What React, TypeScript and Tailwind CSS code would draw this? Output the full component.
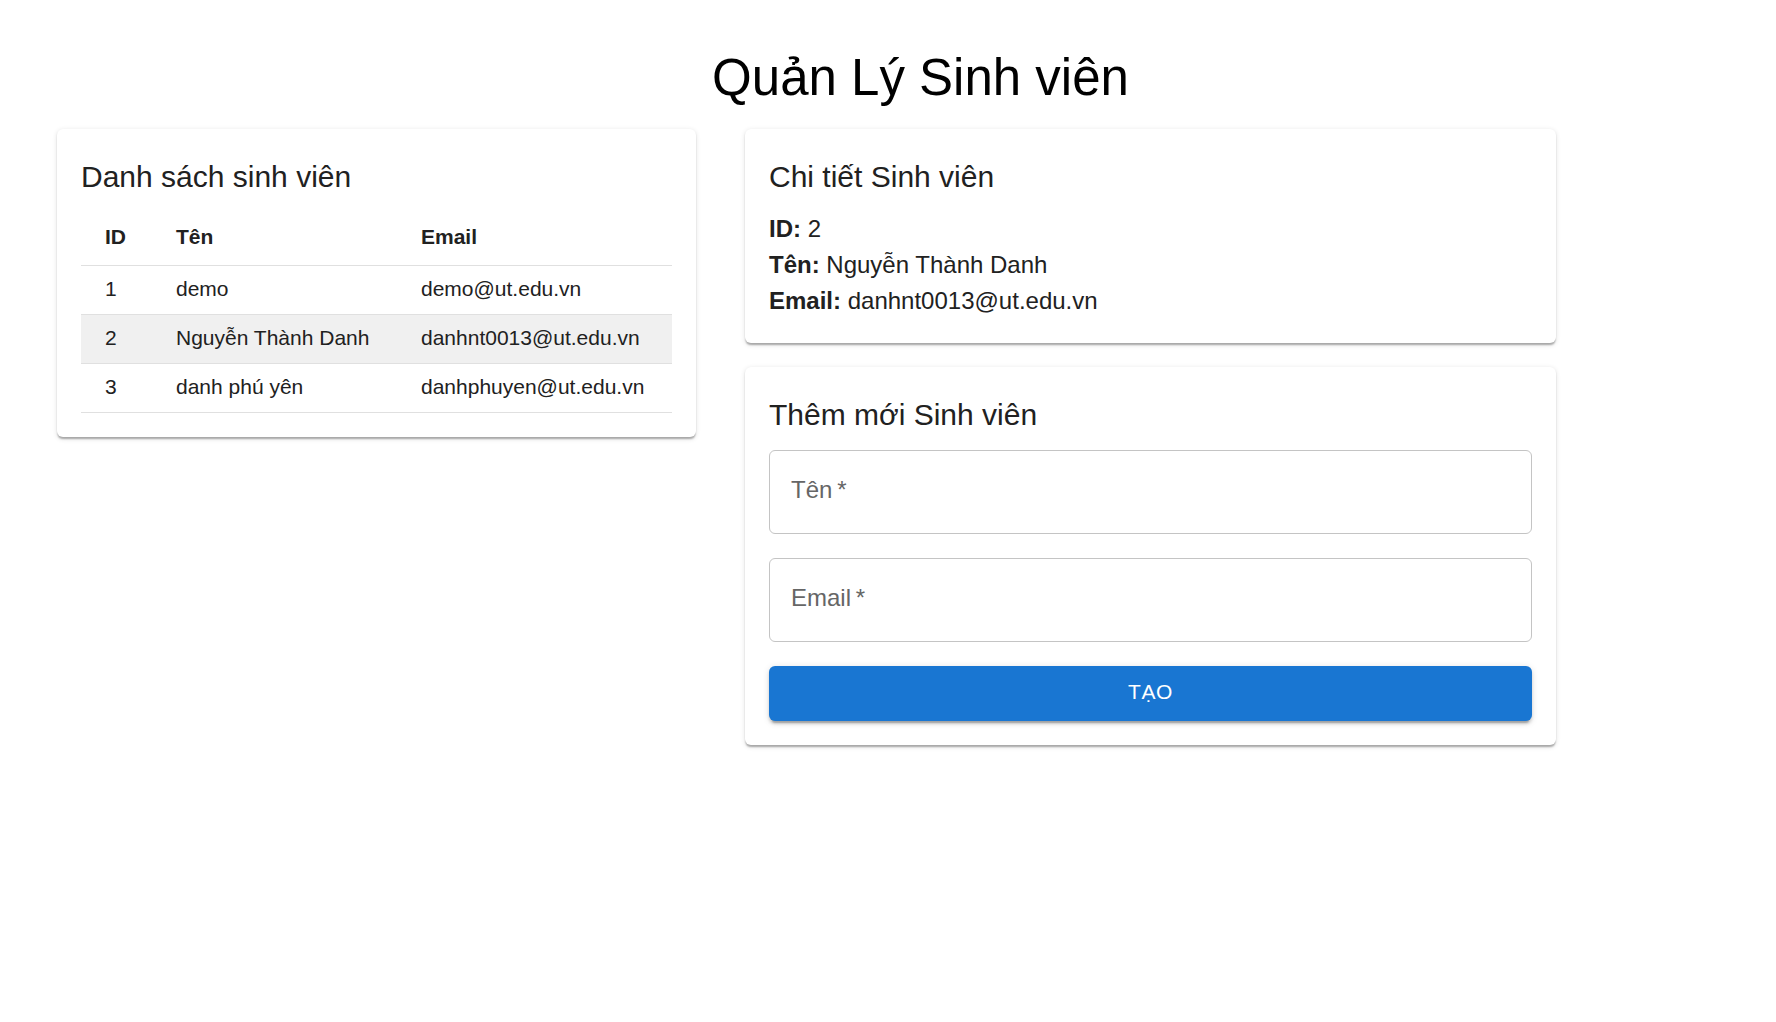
import { useState } from 'react';

type Student = {
  id: number;
  name: string;
  email: string;
};

const students: Student[] = [
  { id: 1, name: 'demo', email: 'demo@ut.edu.vn' },
  { id: 2, name: 'Nguyễn Thành Danh', email: 'danhnt0013@ut.edu.vn' },
  { id: 3, name: 'danh phú yên', email: 'danhphuyen@ut.edu.vn' },
];

const cardClass =
  'bg-white rounded-[6px] p-6 shadow-[0_3px_2px_-1.5px_rgba(0,0,0,0.18),0_1.5px_1.5px_0_rgba(0,0,0,0.12),0_1.5px_5px_0_rgba(0,0,0,0.12)]';

const cols = 'grid grid-cols-[71px_245px_274px]';

const App = () => {
  const [selected, setSelected] = useState<number>(2);
  const [name, setName] = useState('');
  const [email, setEmail] = useState('');

  const current = students.find((s) => s.id === selected);

  return (
    <div className="min-h-screen bg-white text-[#212121] font-['Liberation_Sans',Arial,sans-serif]">
      {/* Page title */}
      <div className="pl-[65px] pt-[46px] mb-[20px] text-center">
        <h1 className="text-[51px] leading-[63px] font-normal text-black">Quản Lý Sinh viên</h1>
      </div>

      <div className="flex items-start gap-[49px] pl-[57px]">
        {/* Student list */}
        <div className={`${cardClass} w-[639px]`}>
          <h2 className="text-[30px] leading-[48px] font-normal mb-[8px]">Danh sách sinh viên</h2>
          <div className="w-[591px] text-[21px] leading-[30px]">
            <div className={`${cols} h-[57px] border-b border-[#e0e0e0] font-bold`}>
              <div className="px-6 pt-[13px]">ID</div>
              <div className="px-6 pt-[13px]">Tên</div>
              <div className="px-6 pt-[13px]">Email</div>
            </div>
            {students.map((s) => (
              <div
                key={s.id}
                onClick={() => setSelected(s.id)}
                className={`${cols} h-[49px] border-b border-[#e0e0e0] cursor-pointer ${
                  s.id === selected ? 'bg-[#f0f0f0]' : 'bg-white'
                }`}
              >
                <div className="px-6 pt-[8px] whitespace-nowrap">{s.id}</div>
                <div className="px-6 pt-[8px] whitespace-nowrap">{s.name}</div>
                <div className="px-6 pt-[8px] whitespace-nowrap">{s.email}</div>
              </div>
            ))}
          </div>
        </div>

        <div className="flex flex-col gap-6 w-[811px]">
          {/* Detail */}
          <div className={cardClass}>
            <h2 className="text-[30px] leading-[48px] font-normal mb-[10px]">Chi tiết Sinh viên</h2>
            {current && (
              <div className="text-[24px] leading-[36px]">
                <p>
                  <strong>ID:</strong> {current.id}
                </p>
                <p>
                  <strong>Tên:</strong> {current.name}
                </p>
                <p>
                  <strong>Email:</strong> {current.email}
                </p>
              </div>
            )}
          </div>

          {/* Create form */}
          <div className={cardClass}>
            <h2 className="text-[30px] leading-[48px] font-normal mb-[11px]">Thêm mới Sinh viên</h2>
            <div className="flex flex-col gap-6">
              <label className="block h-[84px] border border-[#c4c4c4] rounded-[6px] px-[21px] pt-[25px]">
                <input
                  value={name}
                  onChange={(e) => setName(e.target.value)}
                  placeholder={'Tên\u2009*'}
                  className="w-full text-[24px] leading-[24px] outline-none placeholder:text-[#666666] bg-transparent"
                />
              </label>
              <label className="block h-[84px] border border-[#c4c4c4] rounded-[6px] px-[21px] pt-[25px]">
                <input
                  value={email}
                  onChange={(e) => setEmail(e.target.value)}
                  placeholder={'Email\u2009*'}
                  className="w-full text-[24px] leading-[24px] outline-none placeholder:text-[#666666] bg-transparent"
                />
              </label>
              <button className="h-[55px] w-full rounded-[6px] bg-[#1976d2] pb-[4px] text-white text-[21px] leading-[24px] uppercase tracking-[0.02857em] shadow-[0_4.5px_1.5px_-3px_rgba(0,0,0,0.2),0_3px_3px_0_rgba(0,0,0,0.14),0_1.5px_7.5px_0_rgba(0,0,0,0.12)]">
                Tạo
              </button>
            </div>
          </div>
        </div>
      </div>
    </div>
  );
};

export default App;
